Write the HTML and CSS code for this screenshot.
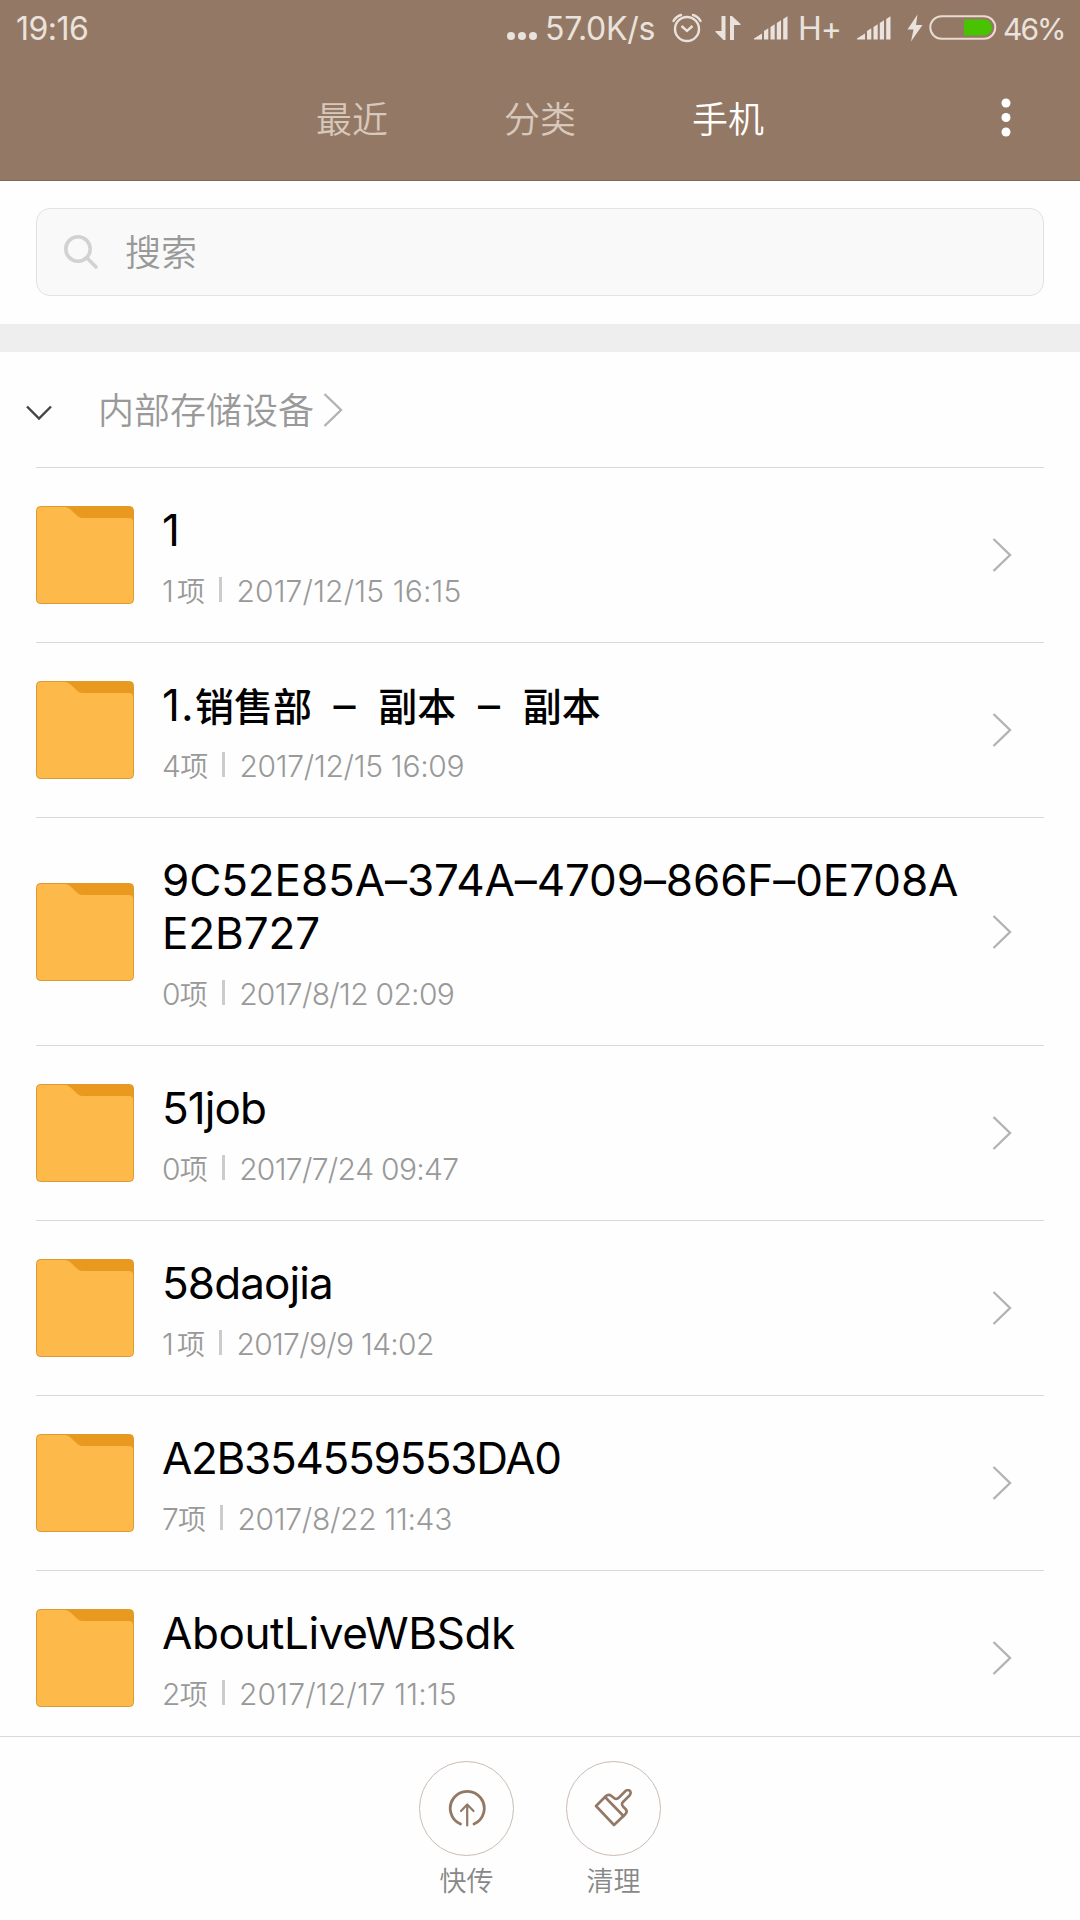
FILE: index.html
```html
<!DOCTYPE html>
<html lang="zh-CN">

<head>
    <meta charset="UTF-8">
    <meta name="viewport" content="width=device-width, initial-scale=1.0">
    <title>文件管理</title>

    <link rel="stylesheet" href="styles.css">

</head>

<body>

    <!-- shared icons -->
    <svg width="0" height="0" class="sprite">
        <symbol id="folder" viewBox="0 0 98 98">
            <rect x="0.5" y="0.5" width="97" height="97" rx="4" fill="#e99a1e" stroke="#dc9a33" />
            <path d="M1 5Q1 1 5 1H29Q32 1 34.500 3.500L42 10.500Q44 12 47 12H93Q97 12 97 16V93Q97 97 93 97H5Q1 97 1 93Z" fill="#fdba4b" />
        </symbol>
        <symbol id="arrow" viewBox="0 0 20 36">
            <path d="M1.500 2L18 18L1.500 34" fill="none" stroke="#b3b3b3" stroke-width="2.400" />
        </symbol>
        <symbol id="signal" viewBox="0 0 34 24">
            <path d="M0 23.500V22.500L8 17.500V23.500ZM10 23.500V15L14.300 12.200V23.500ZM16.500 23.500V11L20.700 8.200V23.500ZM22.800 23.500V7L27 4.200V23.500ZM29.200 23.500V3L33.500 0.300V23.500Z" fill="#eae2dc" />
        </symbol>
    </svg>

    <div class="phone">

        <div class="header">
            <div class="status">
                <span class="time">19:16</span>
                <svg class="dots" width="30" height="8" viewBox="0 0 30 8">
                    <circle cx="4" cy="4" r="4" />
                    <circle cx="15" cy="4" r="4" />
                    <circle cx="26" cy="4" r="4" />
                </svg>
                <span class="speed">57.0K/s</span>
                <svg class="alarm" width="30" height="30" viewBox="0 0 30 30">
                    <circle cx="15" cy="16" r="12" />
                    <path d="M9.500 13L15 18L20.500 13" />
                    <path d="M1.500 8Q4 3.500 9 2M28.500 8Q26 3.500 21 2" stroke-linecap="round" />
                </svg>
                <svg class="updown" width="26" height="26" viewBox="0 0 26 26">
                    <path d="M10.500 1V25H8.500L0.500 17V16H6.500V1ZM15 25V1H17L25.500 9V10H19V25Z" />
                </svg>
                <svg class="signal" width="34" height="24"><use href="#signal" /></svg>
                <span class="net">H+</span>
                <svg class="signal second" width="34" height="24"><use href="#signal" /></svg>
                <svg class="bolt" width="16" height="28" viewBox="0 0 16 28">
                    <path d="M10.500 0.500L0.500 15.500H6.500L4 27.500L15.500 11H9Z" />
                </svg>
                <svg class="battery" width="68" height="26" viewBox="0 0 68 26">
                    <rect x="1.300" y="1.300" width="65" height="22.400" rx="11.200" fill="none" stroke="#eadbd0" stroke-width="2" />
                    <path d="M35 4.500H55A8 8 0 0 1 55 20.500H35Z" fill="#47c300" />
                </svg>
                <span class="percent">46%</span>
            </div>

            <div class="tabs">
                <span class="tab">最近</span>
                <span class="tab">分类</span>
                <span class="tab active">手机</span>
                <svg class="more" width="10" height="40" viewBox="0 0 10 40">
                    <circle cx="5" cy="5" r="4.500" />
                    <circle cx="5" cy="19.500" r="4.500" />
                    <circle cx="5" cy="34" r="4.500" />
                </svg>
            </div>
        </div>

        <div class="search">
            <div class="search-box">
                <svg width="36" height="36" viewBox="0 0 36 36">
                    <circle cx="15" cy="15" r="12.200" />
                    <path d="M24 24L33 33" />
                </svg>
                <span>搜索</span>
            </div>
        </div>

        <div class="storage">
            <svg class="down" width="26" height="16" viewBox="0 0 26 16">
                <path d="M1 1.500L13 13.500L25 1.500" />
            </svg>
            <span>内部存储设备</span>
            <svg class="right" width="20" height="36"><use href="#arrow" /></svg>
        </div>

        <div class="list">
            <div class="row">
                <svg class="folder"><use href="#folder" /></svg>
                <div class="info">
                    <div class="name">1</div>
                    <div class="meta one">1<b>项</b><i></i><span class="loose">2017/12/15 16:15</span></div>
                </div>
                <svg class="arrow"><use href="#arrow" /></svg>
            </div>
            <div class="row">
                <svg class="folder"><use href="#folder" /></svg>
                <div class="info">
                    <div class="name cn">1.<b>销售部</b> – <b>副本</b> – <b>副本</b></div>
                    <div class="meta">4<b>项</b><i></i><span class="medium">2017/12/15 16:09</span></div>
                </div>
                <svg class="arrow"><use href="#arrow" /></svg>
            </div>
            <div class="row">
                <svg class="folder"><use href="#folder" /></svg>
                <div class="info">
                    <div class="name long">9C52E85A–374A–4709–866F–0E708AE2B727</div>
                    <div class="meta">0<b>项</b><i></i><span>2017/8/12 02:09</span></div>
                </div>
                <svg class="arrow"><use href="#arrow" /></svg>
            </div>
            <div class="row">
                <svg class="folder"><use href="#folder" /></svg>
                <div class="info">
                    <div class="name">51job</div>
                    <div class="meta">0<b>项</b><i></i><span>2017/7/24 09:47</span></div>
                </div>
                <svg class="arrow"><use href="#arrow" /></svg>
            </div>
            <div class="row">
                <svg class="folder"><use href="#folder" /></svg>
                <div class="info">
                    <div class="name">58daojia</div>
                    <div class="meta one">1<b>项</b><i></i><span>2017/9/9 14:02</span></div>
                </div>
                <svg class="arrow"><use href="#arrow" /></svg>
            </div>
            <div class="row">
                <svg class="folder"><use href="#folder" /></svg>
                <div class="info">
                    <div class="name tight">A2B354559553DA0</div>
                    <div class="meta">7<b>项</b><i></i><span class="medium">2017/8/22 11:43</span></div>
                </div>
                <svg class="arrow"><use href="#arrow" /></svg>
            </div>
            <div class="row">
                <svg class="folder"><use href="#folder" /></svg>
                <div class="info">
                    <div class="name wide">AboutLiveWBSdk</div>
                    <div class="meta">2<b>项</b><i></i><span class="loose">2017/12/17 11:15</span></div>
                </div>
                <svg class="arrow"><use href="#arrow" /></svg>
            </div>
        </div>

        <div class="footer">
            <div class="action">
                <div class="circle">
                    <svg width="40" height="40" viewBox="0 0 40 40">
                        <path d="M13.500 35A17 17 0 1 1 27 35" stroke-width="2.800" />
                        <path d="M20.200 36.500V15.500M14 22L20.200 15.500L26.500 22" stroke-width="2.200" />
                    </svg>
                </div>
                <span>快传</span>
            </div>
            <div class="action">
                <div class="circle">
                    <svg width="40" height="40" viewBox="0 0 40 40">
                        <path d="M2 17L11.500 7.500Q14.500 4.500 17.500 7L20 9Q22.500 11 25 8.500L31.500 2Q34 0 36 2Q37.500 4 35.500 6.500L29 13Q27 15 29 17.500L31.500 20Q34 22.500 31 25.500L20 36Z" />
                        <path d="M11 8L29.500 27" />
                    </svg>
                </div>
                <span>清理</span>
            </div>
        </div>

    </div>

</body>

</html>
```
FILE: styles.css
```css
body {
    margin: 0;
    background-color: #fefefe;
    font-family: Inter, "Noto Sans CJK SC", sans-serif;
}

.sprite {
    display: none;
}

svg {
    flex-shrink: 0;
}

.phone {
    width: 1080px;
    height: 1920px;
    display: flex;
    flex-direction: column;
    overflow: hidden;
}

/* header */
.header {
    height: 181px;
    box-sizing: border-box;
    background-color: #937965;
    border-bottom: 1px solid #80695a;
    flex-shrink: 0;
}

.status {
    display: flex;
    align-items: center;
    height: 56px;
    padding-left: 16px;
    color: #eae2dc;
    font-size: 32px;
    letter-spacing: -1px;
    line-height: 56px;
}

.status svg {
    fill: #eae2dc;
}

.status span {
    margin-top: 2px;
}

.status .time {
    width: 491px;
    letter-spacing: -0.5px;
}

.status .dots {
    margin-top: 15px;
}

.status .speed {
    width: 127px;
    margin-left: 8px;
    letter-spacing: -0.3px;
}

.status .alarm {
    fill: none;
    stroke: #eae2dc;
    stroke-width: 2.4;
}

.status .updown {
    margin-left: 13px;
}

.status .signal {
    margin-left: 13px;
}

.status .net {
    width: 46px;
    margin-left: 10px;
}

.status .second {
    margin-left: 13px;
}

.status .bolt {
    margin-left: 16px;
}

.status .battery {
    margin-left: 6px;
}

.status .percent {
    margin-left: 6px;
    font-size: 30px;
    letter-spacing: -2px;
}

.tabs {
    display: flex;
    align-items: center;
    height: 124px;
    padding-left: 316px;
}

.tabs .tab {
    width: 188px;
    margin-top: 3px;
    color: #d8c8bc;
    font-size: 36px;
    font-weight: 350;
    line-height: 124px;
}

.tabs .active {
    color: white;
}

.tabs .more {
    margin-left: 121px;
    fill: white;
}

/* search */
.search {
    padding: 27px 36px 28px;
    border-bottom: 28px solid #eeeeee;
}

.search-box {
    display: flex;
    align-items: center;
    height: 86px;
    padding-left: 26px;
    border: 1px solid #e2e2e2;
    border-radius: 14px;
    background-color: #f9f9f9;
}

.search-box svg {
    fill: none;
    stroke: #d2d2d2;
    stroke-width: 3.6;
    stroke-linecap: round;
}

.search-box span {
    margin-top: 2px;
    margin-left: 26px;
    color: #999999;
    font-size: 36px;
    font-weight: 350;
    line-height: 84px;
}

/* storage title */
.storage {
    display: flex;
    align-items: center;
    height: 115px;
    padding-left: 26px;
}

.storage .down {
    margin-top: 6px;
    fill: none;
    stroke: #444444;
    stroke-width: 2.4;
}

.storage span {
    margin-top: 3px;
    margin-left: 46px;
    color: #999999;
    font-size: 36px;
    font-weight: 350;
    line-height: 112px;
}

.storage .right {
    margin-left: 9px;
}

/* file list */
.list {
    flex: 1;
    min-height: 0;
    overflow: hidden;
    padding: 0 36px;
}

.list .row {
    display: flex;
    align-items: center;
    border-top: 1px solid #d9d9d9;
}

.row .folder {
    width: 98px;
    height: 98px;
}

.row .info {
    width: 806px;
    padding: 36px 0 33px;
    margin-left: 28px;
}

.row .name {
    color: black;
    font-size: 44px;
    letter-spacing: -0.9px;
    line-height: 53px;
    word-break: break-all;
}

.row .name b {
    font-size: 39px;
    font-weight: 500;
    letter-spacing: 0;
    line-height: 1;
}

.row .cn {
    letter-spacing: 1.2px;
    word-spacing: 8px;
}

.row .long {
    letter-spacing: -0.1px;
}

.row .tight {
    letter-spacing: -1.3px;
}

.row .wide {
    letter-spacing: -0.4px;
}

.row .meta {
    height: 36px;
    margin-top: 16px;
    color: #999999;
    font-size: 30px;
    font-weight: 300;
    font-kerning: none;
    letter-spacing: -0.7px;
    line-height: 36px;
}

.row .meta b {
    font-size: 28px;
    font-weight: 350;
    line-height: 1;
}

.row .one b {
    margin-left: 4px;
}

.row .meta i {
    display: inline-block;
    width: 3px;
    height: 25px;
    margin: 0 14px 0 15px;
    background-color: #cccccc;
}

.meta .medium {
    letter-spacing: -0.3px;
}

.meta .loose {
    letter-spacing: 0.15px;
}

.row .arrow {
    width: 20px;
    height: 36px;
    margin-left: auto;
    margin-right: 32px;
}

/* bottom bar */
.footer {
    display: flex;
    justify-content: center;
    gap: 52px;
    height: 183px;
    border-top: 1px solid #d9d9d9;
}

.action {
    display: flex;
    flex-direction: column;
    align-items: center;
    padding-top: 24px;
}

.action .circle {
    display: flex;
    justify-content: center;
    align-items: center;
    width: 93px;
    height: 93px;
    border: 1px solid #c9bcb3;
    border-radius: 50%;
}

.circle svg {
    fill: none;
    stroke: #937965;
    stroke-width: 2.6;
    stroke-linejoin: round;
    stroke-linecap: round;
}

.action span {
    margin-top: 6px;
    color: #888888;
    font-size: 27px;
    font-weight: 350;
    line-height: 40px;
}
```
